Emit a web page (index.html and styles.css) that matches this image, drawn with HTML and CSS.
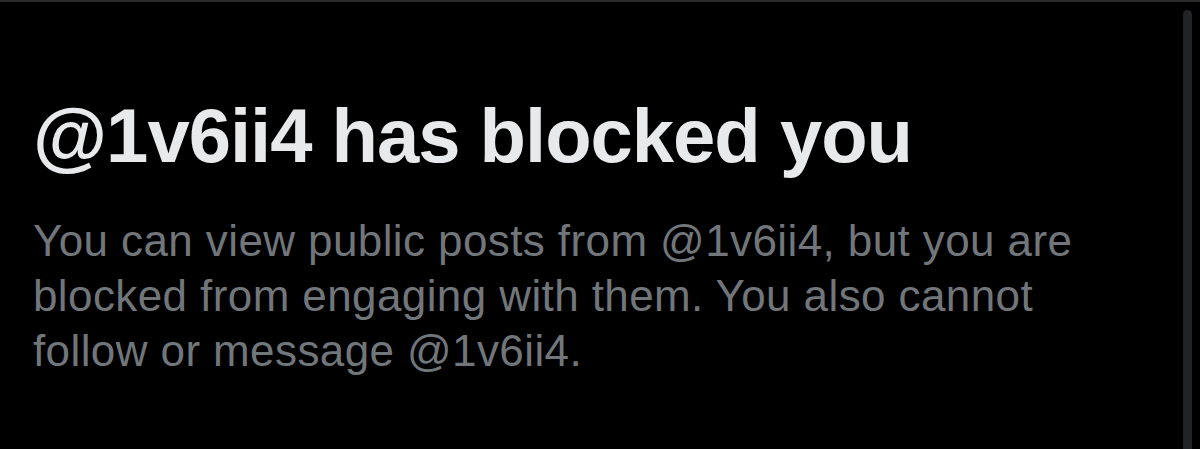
FILE: index.html
```html
<!DOCTYPE html>
<html>
<head>
<meta charset="utf-8">
<link rel="stylesheet" href="styles.css">
</head>
<body>
<main class="page">
  <section class="notice">
    <h1 class="title">@1v6ii4 has blocked you</h1>
    <p class="desc">You can view public posts from @1v6ii4, but you are blocked from engaging with them. You also cannot follow or message @1v6ii4.</p>
  </section>
  <div class="scrollbar"></div>
</main>
</body>
</html>
```
FILE: styles.css
```css
html, body {
  margin: 0;
  padding: 0;
  background: #000;
}
.page {
  position: relative;
  width: 1200px;
  height: 449px;
  box-sizing: border-box;
  border-top: 2px solid #2a2c2e;
  overflow: hidden;
}
.notice {
  padding: 90px 0 0 33px;
  width: 1100px;
}
.title {
  margin: 0;
  font-family: "Liberation Sans", Arial, sans-serif;
  font-weight: 700;
  font-size: 76px;
  line-height: 88px;
  color: #e7e9ea;
  letter-spacing: -1px;
}
.desc {
  margin: 33px 0 0;
  font-family: "Liberation Sans", Arial, sans-serif;
  font-size: 44px;
  line-height: 55px;
  letter-spacing: 0.4px;
  color: #71767b;
}
.scrollbar {
  position: absolute;
  right: 8px;
  top: 8px;
  bottom: -10px;
  width: 9px;
  border-radius: 5px;
  background: #222324;
}
```
